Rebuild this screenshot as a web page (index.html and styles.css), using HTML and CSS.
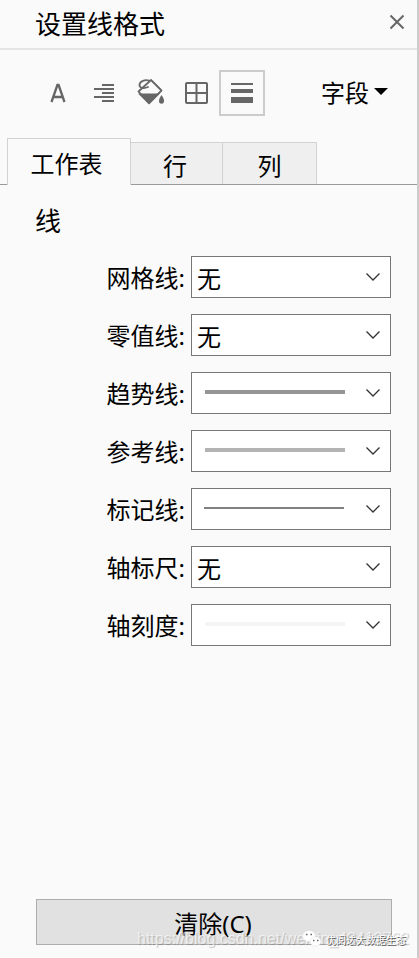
FILE: index.html
```
<!DOCTYPE html>
<html lang="zh-CN">
<head>
    <meta charset="UTF-8">
    <title>设置线格式</title>
    <link rel="stylesheet" href="styles.css">
</head>
<body>
<div class="panel">
    <div class="titlebar">
        <h1>设置线格式</h1>
        <svg class="close" width="16" height="16" viewBox="0 0 16 16"><path d="M1.500 1.500l13 13M14.500 1.500l-13 13"/></svg>
    </div>

    <div class="toolbar">
        <a class="tool" title="字体"><svg width="46" height="46" viewBox="0 0 46 46"><path d="M16.500 32l5.900-17h1.200l5.900 17M18.500 27h9" fill="none" stroke="#666" stroke-width="2.300"/></svg></a>
        <a class="tool" title="对齐"><svg width="46" height="46" viewBox="0 0 46 46"><path d="M21 15h12M13 19h20M21 23h12M13 27h20M21 31h12" fill="none" stroke="#666" stroke-width="2"/></svg></a>
        <a class="tool" title="阴影"><svg width="46" height="46" viewBox="0 0 46 46">
            <path d="M11.500 21.500L24 10L34.500 20.500L22 33Z" fill="none" stroke="#666" stroke-width="1.800" stroke-linejoin="round"/>
            <path d="M22 10.500c-4-1-9 .5-9.500 4-.5 3.500 4 4.500 8.500 2.500" fill="none" stroke="#666" stroke-width="1.800" stroke-linecap="round"/>
            <path d="M11 23.500h22L22 34.500Z" fill="#666"/>
            <path d="M34.500 25c-2 3-2.500 4.500-2.500 6a2.500 2.800 0 0 0 5 0c0-1.500-.5-3-2.500-6z" fill="#666"/>
        </svg></a>
        <a class="tool" title="边界"><svg width="46" height="46" viewBox="0 0 46 46"><rect x="13" y="13" width="21" height="20" rx="1" fill="none" stroke="#666" stroke-width="2"/><path d="M23.500 13v20M13 23h20" stroke="#666" stroke-width="2"/></svg></a>
        <a class="tool active" title="线"><svg width="42" height="42" viewBox="0 0 42 42"><path d="M10 11h22v2H10zM10 17h22v4H10zM10 25h22v6H10z" fill="#666"/></svg></a>
        <a class="fields">字段<span class="caret"></span></a>
    </div>

    <div class="tabs">
        <a class="tab current">工作表</a>
        <a class="tab">行</a>
        <a class="tab last">列</a>
    </div>

    <h2>线</h2>
    <div class="options">
        <label>网格线:</label>
        <div class="select">无<svg class="arrow" width="16" height="10" viewBox="0 0 16 10"><path d="M1.500 1.500l6.500 6.500 6.500-6.500"/></svg></div>
        <label>零值线:</label>
        <div class="select">无<svg class="arrow" width="16" height="10" viewBox="0 0 16 10"><path d="M1.500 1.500l6.500 6.500 6.500-6.500"/></svg></div>
        <label>趋势线:</label>
        <div class="select"><span class="line trend"></span><svg class="arrow" width="16" height="10" viewBox="0 0 16 10"><path d="M1.500 1.500l6.500 6.500 6.500-6.500"/></svg></div>
        <label>参考线:</label>
        <div class="select"><span class="line reference"></span><svg class="arrow" width="16" height="10" viewBox="0 0 16 10"><path d="M1.500 1.500l6.500 6.500 6.500-6.500"/></svg></div>
        <label>标记线:</label>
        <div class="select"><span class="line drop"></span><svg class="arrow" width="16" height="10" viewBox="0 0 16 10"><path d="M1.500 1.500l6.500 6.500 6.500-6.500"/></svg></div>
        <label>轴标尺:</label>
        <div class="select">无<svg class="arrow" width="16" height="10" viewBox="0 0 16 10"><path d="M1.500 1.500l6.500 6.500 6.500-6.500"/></svg></div>
        <label>轴刻度:</label>
        <div class="select"><span class="line tick"></span><svg class="arrow" width="16" height="10" viewBox="0 0 16 10"><path d="M1.500 1.500l6.500 6.500 6.500-6.500"/></svg></div>
    </div>

    <a class="clear">清除(C)</a>

    <div class="url">https://blog.csdn.net/weixin_43412762</div>
    <div class="account">
        <svg width="20" height="18" viewBox="0 0 20 18"><ellipse cx="7" cy="6" rx="6.500" ry="5.500"/><ellipse cx="13.500" cy="11.500" rx="5.500" ry="4.700"/><path class="eyes" d="M4 4.500h1.500M8.500 4.500h1.500M11 10.500h1.500M15 10.500h1.500"/></svg>
        <span>优阅达大数据生态</span>
    </div>
</div>
</body>
</html>
```
FILE: styles.css
```
* {
    box-sizing: border-box;
}

body {
    margin: 0;
    font-family: "Noto Sans", "Noto Sans CJK SC", sans-serif;
    font-size: 24px;
    font-weight: 400;
    color: #000;
    background: #fafafa;
}

.panel {
    position: relative;
    display: flex;
    flex-direction: column;
    height: 958px;
    border-right: 2px solid #ccc;
    overflow: hidden;
}

.titlebar {
    display: flex;
    justify-content: space-between;
    height: 50px;
    padding: 0 12px 0 35px;
    border-bottom: 2px solid #e5e5e5;
}

h1, h2 {
    margin: 0;
    font-size: 26px;
    font-weight: 400;
    line-height: 48px;
}

.close {
    margin-top: 14px;
    fill: none;
    stroke: #666;
    stroke-width: 2;
}

.toolbar {
    display: flex;
    height: 88px;
    padding: 20px 0 0 35px;
}

.tool {
    width: 46px;
    height: 46px;
}

.tool svg {
    display: block;
}

.active {
    border: 2px solid #ccc;
}

.fields {
    display: flex;
    align-items: center;
    height: 42px;
    margin-left: 56px;
}

.caret {
    margin: 1px 0 0 5px;
    border: 7px solid transparent;
    border-top-color: #000;
    border-bottom: 0;
}

.tabs {
    display: flex;
    align-items: flex-end;
    height: 47px;
    padding-left: 7px;
    background: linear-gradient(#999, #999) 0 46px / 100% 1px no-repeat;
}

.tab {
    width: 92px;
    height: 42px;
    padding-right: 3px;
    border: 1px solid #d2d2d2;
    border-width: 1px 1px 0 0;
    margin-bottom: 1px;
    background: #efefef;
    line-height: 45px;
    text-align: center;
}

.current {
    width: 124px;
    height: 47px;
    padding-right: 5px;
    margin-bottom: 0;
    border-left-width: 1px;
    background: #fafafa;
    line-height: 49px;
}

.last {
    width: 94px;
    padding-right: 0;
}

h2 {
    height: 71px;
    padding-left: 35px;
    line-height: 72px;
}

.options {
    display: grid;
    grid-template-columns: 185px 200px;
    column-gap: 6px;
    row-gap: 16px;
}

label {
    line-height: 44px;
    text-align: right;
}

.options label, .select {
    height: 42px;
}

.select {
    display: flex;
    align-items: center;
    padding: 0 9px 0 5px;
    border: 1px solid #777;
    background: #fff;
    line-height: 44px;
}

.select:not(:has(.line)) {
    padding-top: 3px;
}

.arrow {
    margin-left: auto;
    fill: none;
    stroke: #333;
    stroke-width: 1.3;
}

.select:not(:has(.line)) .arrow {
    margin-bottom: 3px;
}

.line {
    width: 140px;
    height: 4px;
    margin: 0 0 2px 8px;
}

.trend {
    background: #969696;
}

.reference {
    background: #b3b3b3;
}

.drop {
    height: 2px;
    margin-left: 7px;
    background: #808080;
}

.tick {
    background: #f5f5f5;
}

.clear {
    width: 356px;
    height: 46px;
    padding-right: 2px;
    margin: auto 0 13px 36px;
    border: 1px solid #adadad;
    background: #e1e1e1;
    line-height: 47px;
    text-align: center;
}

/* watermarks */
.url {
    position: absolute;
    left: 137px;
    top: 929px;
    font: 16px/20px "Liberation Sans", sans-serif;
    color: rgba(255, 255, 255, .65);
    text-shadow: 1px 1px 1px rgba(0, 0, 0, .2);
    white-space: nowrap;
}

.account {
    position: absolute;
    left: 302px;
    top: 930px;
    display: flex;
    gap: 4px;
    font-size: 10px;
    line-height: 20px;
    color: #fff;
    text-shadow: 1px 1px 0 #555;
    white-space: nowrap;
}

.account svg {
    fill: #fff;
    stroke: #ddd;
    stroke-width: .5;
}

.account .eyes {
    stroke: #666;
    stroke-width: 1.5;
}
```
